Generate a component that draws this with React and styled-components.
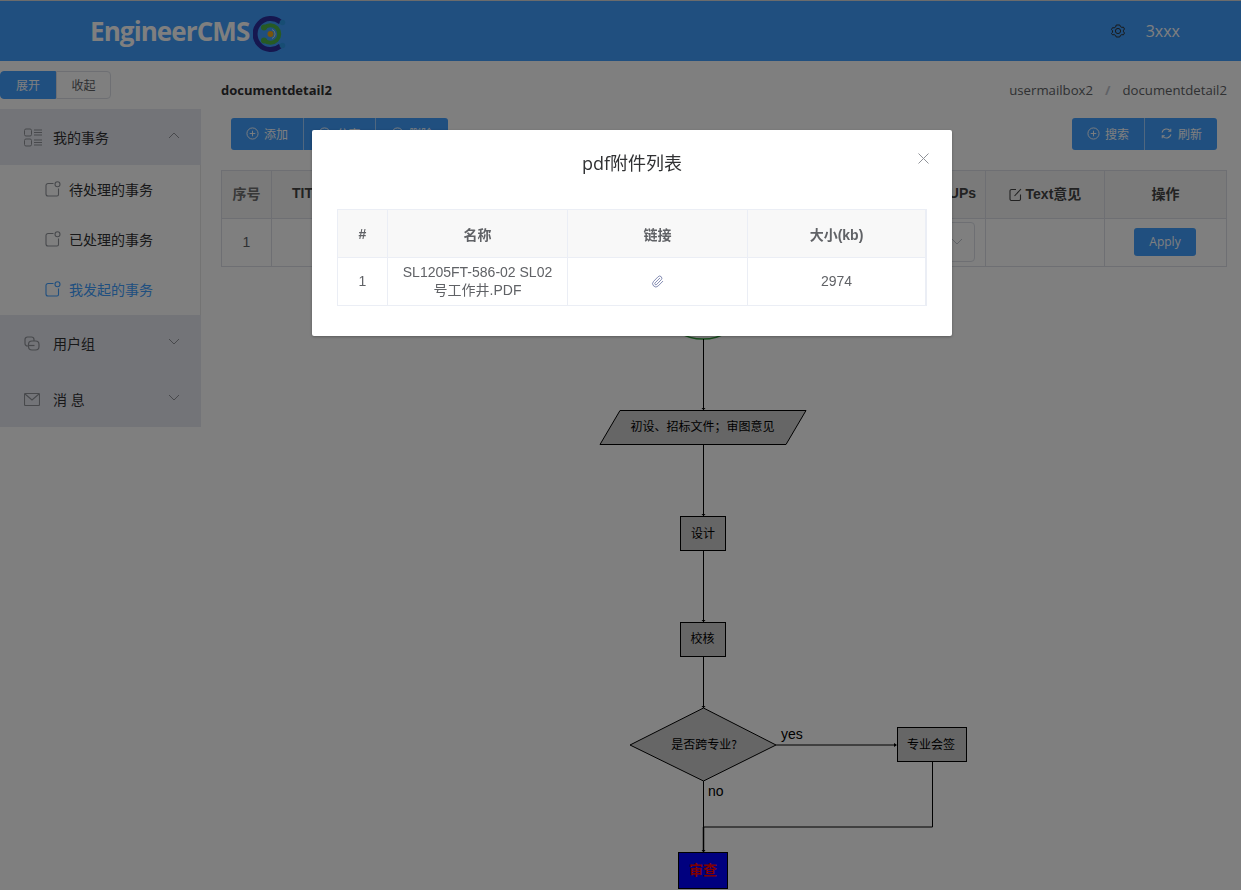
import React from 'react'
import styled, { createGlobalStyle } from 'styled-components'
import { Paperclip } from 'lucide-react'

const SANS = `"Open Sans", "Noto Sans CJK SC", sans-serif`
const ARIAL = `"Liberation Sans", "Noto Sans CJK SC", sans-serif`

const Global = createGlobalStyle`
  html, body {
    margin: 0;
    height: 100%;
    overflow: hidden;
    background: #fff;
    font-family: ${SANS};
  }
  * { box-sizing: border-box; }
`

const PlusCircle = () => (
  <svg width="13" height="13" viewBox="0 0 14 14" fill="none" stroke="currentColor" strokeWidth="1">
    <circle cx="7" cy="7" r="6" />
    <path d="M7 4v6M4 7h6" />
  </svg>
)

const Refresh = () => (
  <svg width="13" height="13" viewBox="0 0 14 14" fill="none" stroke="currentColor" strokeWidth="1.1">
    <path d="M2.2 6a5 5 0 0 1 9-1.6M11.8 8a5 5 0 0 1-9 1.6" />
    <path d="M11.6 1.8v2.8H8.8M2.4 12.2V9.4h2.8" />
  </svg>
)

const Chevron = ({ up }) => (
  <svg width="12" height="7" viewBox="0 0 12 7" fill="none" stroke="currentColor" strokeWidth="1">
    <path d={up ? 'M1 6l5-5 5 5' : 'M1 1l5 5 5-5'} />
  </svg>
)

const TaskIcon = () => (
  <svg width="16" height="16" viewBox="0 0 16 16" fill="none" stroke="currentColor" strokeWidth="1.1">
    <path d="M8.5 2.5H3a2 2 0 0 0-2 2V13a2 2 0 0 0 2 2h9a1.5 1.5 0 0 0 1.5-1.5V7.5" />
    <circle cx="12.5" cy="3.2" r="2.5" />
  </svg>
)

const ListIcon = () => (
  <svg width="19" height="19" viewBox="0 0 19 19" fill="none" stroke="currentColor" strokeWidth="1">
    <rect x="0.5" y="1" width="7" height="7" rx="1.5" />
    <rect x="0.5" y="11" width="7" height="7" rx="1.5" />
    <path d="M10 2h8M10 4.5h8M10 7h8M10 12h8M10 14.5h8M10 17h8" />
  </svg>
)

const GroupIcon = () => (
  <svg width="16" height="15" viewBox="0 0 16 15" fill="none" stroke="currentColor" strokeWidth="1.2">
    <path d="M4 10H3.5A2.5 2.5 0 0 1 1 7.5V3.5A2.5 2.5 0 0 1 3.5 1h4A2.5 2.5 0 0 1 10 3.5V5" />
    <rect x="4.5" y="5" width="10.5" height="9" rx="3.5" />
    <path d="M4.5 9.5h6" />
  </svg>
)

const MailIcon = () => (
  <svg width="16" height="13" viewBox="0 0 16 13" fill="none" stroke="currentColor" strokeWidth="1.1">
    <rect x="0.5" y="0.5" width="15" height="12" rx="1" />
    <path d="M1 1l7 6 7-6" />
  </svg>
)

const GearIcon = () => (
  <svg width="14" height="14" viewBox="0 0 14 14" fill="none" stroke="currentColor" strokeWidth="1">
    <path d="M5.2 1h3.6l.5 1.5 1.6.9 1.5-.3 1.1 1.9-1 1.2v1.6l1 1.2-1.1 1.9-1.5-.3-1.6.9-.5 1.5H5.2l-.5-1.5-1.6-.9-1.5.3L.5 9.5l1-1.2V6.7l-1-1.2 1.1-1.9 1.5.3 1.6-.9z" />
    <circle cx="7" cy="7" r="2.6" />
  </svg>
)

const EditIcon = () => (
  <svg width="13" height="13" viewBox="0 0 13 13" fill="none" stroke="currentColor" strokeWidth="1.1">
    <path d="M7 1.5H2.5A1.5 1.5 0 0 0 1 3v8a1.5 1.5 0 0 0 1.5 1.5H10A1.5 1.5 0 0 0 11.5 11V6.5" />
    <path d="M5.5 8L12 1" />
  </svg>
)

const Logo = () => (
  <svg width="36" height="40" viewBox="0 0 36 40" fill="none">
    <path d="M27.5 8.1A15.5 15.5 0 1 0 27.5 31.9" stroke="#2c2f9e" strokeWidth="5" />
    <path d="M11.5 13.5a8.8 8.8 0 1 1 0 13" stroke="#4fb548" strokeWidth="4" />
    <path d="M19 15.5a4.800 4.800 0 0 1 0 9" stroke="#d8ecd0" strokeWidth="1" />
    <circle cx="17.5" cy="20" r="3" fill="#f0a818" />
    <circle cx="11" cy="13.5" r="3" fill="#4fb548" />
    <circle cx="11" cy="26.5" r="3" fill="#4fb548" />
    <circle cx="29.5" cy="8.5" r="2.8" fill="#2f9be8" />
    <circle cx="29.5" cy="31.5" r="2.8" fill="#2f9be8" />
  </svg>
)

const Flow = () => (
  <FlowSvg width="400" height="570" viewBox="0 0 400 570">
    <ellipse cx="153" cy="-3" rx="33" ry="22" fill="#fff" stroke="#2f9b3a" strokeWidth="1.5" />
    <g stroke="#000" strokeWidth="1" fill="none">
      <path d="M153.5 19v71M153.5 125v71M153.5 230v72M153.5 336v52" />
      <path d="M226 425h120M382.5 442v65H153M153.5 461v69" />
      <path d="M153.5 507v25" strokeWidth="1.5" />
    </g>
    <g fill="#000">
      <path d="M151.5 88h4l-2 2zM151.5 194h4l-2 2zM151.5 300h4l-2 2zM151.5 386h4l-2 2zM151.5 530h4l-2 2zM344 423v4l3-2z" />
    </g>
    <g stroke="#000" strokeWidth="1" fill="#ccc">
      <polygon points="70,90.5 256,90.5 236,124.5 50,124.5" />
      <rect x="130.5" y="196.5" width="45" height="34" />
      <rect x="130.5" y="302.5" width="45" height="34" />
      <polygon points="153.5,388 226,425 153.5,461 80,425" />
      <rect x="347.5" y="407.5" width="69" height="34" />
      <rect x="128.5" y="532.5" width="49" height="36" fill="#0000ff" />
    </g>
    <g fontFamily={`"Noto Sans CJK SC", sans-serif`} fontSize="12" textAnchor="middle" fill="#000">
      <text x="152.5" y="110.5">初设、招标文件；审图意见</text>
      <text x="153" y="218">设计</text>
      <text x="152.5" y="323">校核</text>
      <text x="154" y="429">是否跨专业?</text>
      <text x="381" y="429">专业会签</text>
      <text x="153" y="555" fill="#ff0000" fontSize="14" fontWeight="700">审查</text>
    </g>
    <g fontFamily={`"Liberation Sans", sans-serif`} fontSize="14" fill="#000">
      <text x="231" y="419">yes</text>
      <text x="158" y="476">no</text>
    </g>
  </FlowSvg>
)

const columns = [
  { label: 'TITLE', width: 80 },
  { label: 'DOCUMENT', width: 276 },
  { label: 'STATE', width: 140 },
  { label: 'ACTION', width: 140 },
  { label: 'GROUPs', width: 78 },
]

export default function App() {
  return (
    <Page>
      <Global />
      <Header>
        <Brand>
          <BrandName>EngineerCMS</BrandName>
          <Logo />
        </Brand>
        <UserArea>
          <GearIcon />
          <UserName>3xxx</UserName>
        </UserArea>
      </Header>
      <Body>
        <Side>
          <Toggle>
            <ToggleBtn active>展开</ToggleBtn>
            <ToggleBtn>收起</ToggleBtn>
          </Toggle>
          <Menu>
            <MenuHead>
              <ListIcon />
              <MenuLabel gap={10}>我的事务</MenuLabel>
              <ChevronWrap><Chevron up /></ChevronWrap>
            </MenuHead>
            <SubItem><TaskIcon /><span>待处理的事务</span></SubItem>
            <SubItem><TaskIcon /><span>已处理的事务</span></SubItem>
            <SubItem active><TaskIcon /><span>我发起的事务</span></SubItem>
            <MenuHead>
              <GroupIcon />
              <MenuLabel>用户组</MenuLabel>
              <ChevronWrap><Chevron /></ChevronWrap>
            </MenuHead>
            <MenuHead>
              <MailIcon />
              <MenuLabel>消 息</MenuLabel>
              <ChevronWrap><Chevron /></ChevronWrap>
            </MenuHead>
          </Menu>
        </Side>
        <Main>
          <TitleRow>
            <PageTitle>documentdetail2</PageTitle>
            <Crumbs>
              <span>usermailbox2</span>
              <CrumbSep>/</CrumbSep>
              <span>documentdetail2</span>
            </Crumbs>
          </TitleRow>
          <Actions>
            <BtnGroup>
              <Btn><PlusCircle />添加</Btn>
              <Btn><PlusCircle />分享</Btn>
              <Btn><PlusCircle />删除</Btn>
            </BtnGroup>
            <BtnGroup>
              <Btn><PlusCircle />搜索</Btn>
              <Btn><Refresh />刷新</Btn>
            </BtnGroup>
          </Actions>
          <Table>
            <thead>
              <tr>
                <Th style={{ width: 50 }} light>序号</Th>
                {columns.map((c) => (
                  <Th key={c.label} style={{ width: c.width }}>{c.label}</Th>
                ))}
                <Th style={{ width: 119 }}><EditIcon /> Text意见</Th>
                <Th>操作</Th>
              </tr>
            </thead>
            <tbody>
              <tr>
                <Td>1</Td>
                <Td /><Td /><Td /><Td />
                <Td>
                  <SelectBox><Chevron /></SelectBox>
                </Td>
                <Td />
                <Td><ApplyBtn>Apply</ApplyBtn></Td>
              </tr>
            </tbody>
          </Table>
          <FlowWrap>
            <Flow />
          </FlowWrap>
        </Main>
      </Body>
      <Overlay />
      <Dialog>
        <DialogHead>
          <DialogTitle>pdf附件列表</DialogTitle>
          <CloseBtn>
            <svg width="11" height="11" viewBox="0 0 11 11" stroke="currentColor" strokeWidth="1">
              <path d="M.5.5l10 10M10.5.5l-10 10" />
            </svg>
          </CloseBtn>
        </DialogHead>
        <AttachTable>
          <thead>
            <tr>
              <AttachTh style={{ width: 50 }}>#</AttachTh>
              <AttachTh style={{ width: 180 }}>名称</AttachTh>
              <AttachTh style={{ width: 180 }}>链接</AttachTh>
              <AttachTh>大小(kb)</AttachTh>
            </tr>
          </thead>
          <tbody>
            <tr>
              <AttachTd>1</AttachTd>
              <AttachTd>SL1205FT-586-02 SL02号工作井.PDF</AttachTd>
              <AttachTd><Paperclip size={13} strokeWidth={1.4} color="#5f6a9c" /></AttachTd>
              <AttachTd>2974</AttachTd>
            </tr>
          </tbody>
        </AttachTable>
      </Dialog>
    </Page>
  )
}

const Page = styled.div`
  height: 890px;
  overflow: hidden;
`

const Header = styled.header`
  height: 61px;
  background: #409eff;
  border-top: 1px solid #d8d8d8;
  display: flex;
  align-items: center;
  justify-content: space-between;
  padding: 0 61px 0 90px;
`

const Brand = styled.div`
  display: flex;
  align-items: center;
  gap: 4px;
  svg { margin-top: 5px; }
`

const BrandName = styled.div`
  font-family: "Open Sans", sans-serif;
  font-size: 26px;
  font-weight: 700;
  letter-spacing: -0.9px;
  color: #fff;
`

const UserArea = styled.div`
  display: flex;
  align-items: center;
  gap: 21px;
  color: #333;
`

const UserName = styled.span`
  font-size: 16px;
  color: #fff;
`

const Body = styled.div`
  display: flex;
`

const Side = styled.aside`
  width: 201px;
  flex-shrink: 0;
  padding-top: 10px;
`

const Toggle = styled.div`
  display: flex;
  width: 111px;
  height: 28px;
  margin-bottom: 10px;
`

const ToggleBtn = styled.div`
  flex: ${(p) => (p.active ? '0 0 56px' : '1')};
  display: flex;
  align-items: center;
  justify-content: center;
  font-size: 12px;
  color: ${(p) => (p.active ? '#fff' : '#606266')};
  background: ${(p) => (p.active ? '#409eff' : '#fff')};
  border: 1px solid ${(p) => (p.active ? '#409eff' : '#dcdfe6')};
  border-radius: ${(p) => (p.active ? '4px 0 0 4px' : '0 4px 4px 0')};
`

const Menu = styled.nav`
  border-right: 1px solid #e6e6e6;
`

const MenuHead = styled.div`
  height: 56px;
  margin-right: -1px;
  padding: 0 21px 0 24px;
  display: flex;
  align-items: center;
  color: #909399;
  background: #e6e8f0;
`

const MenuLabel = styled.span`
  flex: 1;
  margin-left: ${(p) => p.gap || 13}px;
  font-size: 14px;
  color: #303133;
`

const ChevronWrap = styled.span`
  display: flex;
  margin-top: -4px;
  color: #909399;
`

const SubItem = styled.div`
  height: 50px;
  padding: 0 0 2px 45px;
  display: flex;
  align-items: center;
  gap: 8px;
  font-size: 14px;
  background: #fff;
  color: ${(p) => (p.active ? '#409eff' : '#303133')};
  svg { color: ${(p) => (p.active ? '#409eff' : '#909399')}; }
`

const Main = styled.main`
  flex: 1;
  padding: 0 14px 0 20px;
`

const TitleRow = styled.div`
  height: 57px;
  display: flex;
  align-items: center;
  justify-content: space-between;
`

const PageTitle = styled.div`
  font-size: 13px;
  font-weight: 700;
  color: #303133;
`

const Crumbs = styled.div`
  display: flex;
  gap: 12px;
  font-size: 13.2px;
  color: #606266;
`

const CrumbSep = styled.span`
  color: #c0c4cc;
  font-weight: 700;
`

const Actions = styled.div`
  display: flex;
  justify-content: space-between;
  padding: 0 10px;
  margin-bottom: 20px;
`

const BtnGroup = styled.div`
  display: flex;
  height: 32px;
  border-radius: 3px;
  overflow: hidden;
`

const Btn = styled.div`
  width: 72px;
  display: flex;
  align-items: center;
  justify-content: center;
  gap: 5px;
  padding-bottom: 1px;
  font-size: 12px;
  color: #fff;
  background: #409eff;
  & + & { border-left: 1px solid rgba(255, 255, 255, 0.5); }
  &:last-child { width: 73px; }
`

const Table = styled.table`
  width: 1006px;
  table-layout: fixed;
  border-collapse: collapse;
  border: 1px solid #dcdfe6;
`

const Th = styled.th`
  height: 48px;
  padding: 0 0 3px;
  border: 1px solid #dcdfe6;
  background: #f5f5f5;
  font-family: ${ARIAL};
  font-size: 14px;
  font-weight: 700;
  color: ${(p) => (p.light ? '#707070' : '#444')};
  white-space: nowrap;
  svg { vertical-align: -2px; }
`

const Td = styled.td`
  height: 48px;
  padding: 0 0 2px;
  border: 1px solid #dcdfe6;
  text-align: center;
  font-family: ${ARIAL};
  font-size: 14px;
  color: #606266;
`

const SelectBox = styled.div`
  width: 66px;
  height: 40px;
  margin: 0 10px 0 auto;
  padding-right: 11px;
  display: flex;
  align-items: center;
  justify-content: flex-end;
  border: 1px solid #dcdfe6;
  border-radius: 4px;
  color: #c0c4cc;
`

const ApplyBtn = styled.button`
  width: 62px;
  height: 28px;
  margin-right: 1px;
  padding: 0;
  border: 0;
  border-radius: 3px;
  background: #409eff;
  color: #fff;
  font-family: ${SANS};
  font-size: 12px;
`

const FlowWrap = styled.div`
  padding-left: 329px;
  margin-top: 53px;
`

const FlowSvg = styled.svg`
  display: block;
  overflow: visible;
`

const Overlay = styled.div`
  position: fixed;
  inset: 0;
  background: rgba(0, 0, 0, 0.5);
`

const Dialog = styled.div`
  position: fixed;
  left: 312px;
  top: 130px;
  width: 640px;
  height: 206px;
  padding: 0 25px;
  background: #fff;
  border-radius: 2px;
  box-shadow: 0 1px 3px rgba(0, 0, 0, 0.3);
`

const DialogHead = styled.div`
  position: relative;
  height: 79px;
  padding-top: 20px;
  text-align: center;
`

const DialogTitle = styled.div`
  font-size: 18px;
  line-height: 26px;
  color: #303133;
`

const CloseBtn = styled.div`
  position: absolute;
  right: -2px;
  top: 23px;
  color: #909399;
  line-height: 0;
`

const AttachTable = styled.table`
  width: 590px;
  table-layout: fixed;
  border-collapse: collapse;
  border: 1px solid #ebeef5;
  border-right-width: 2px;
`

const AttachTh = styled.th`
  height: 48px;
  border: 1px solid #ebeef5;
  background: #f8f8f8;
  font-family: ${ARIAL};
  font-size: 14px;
  font-weight: 700;
  color: #606266;
`

const AttachTd = styled.td`
  height: 48px;
  padding: 0 10px 1px;
  border: 1px solid #ebeef5;
  text-align: center;
  font-family: ${ARIAL};
  font-size: 14px;
  line-height: 18px;
  color: #606266;
  svg { vertical-align: middle; margin-bottom: 2px; }
`
